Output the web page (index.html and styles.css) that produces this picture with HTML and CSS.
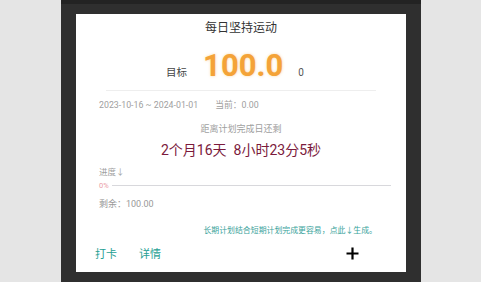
FILE: index.html
```html
<!DOCTYPE html>
<html lang="zh-CN">
<head>
    <meta charset="UTF-8">
    <meta name="viewport" content="width=device-width, initial-scale=1.0">
    <title>每日坚持运动</title>
    <link rel="stylesheet" href="styles.css">
</head>
<body>
    <div class="panel">
        <div class="card">
            <div class="title">每日坚持运动</div>
            <div class="target">
                <span class="target-label">目标</span>
                <span class="target-value">100.0</span>
                <span class="target-unit">0</span>
            </div>
            <div class="divider"></div>
            <div class="dates">
                <span>2023-10-16 ~ 2024-01-01</span>
                <span>当前：0.00</span>
            </div>
            <div class="remain-label">距离计划完成日还剩</div>
            <div class="countdown">2个月16天&nbsp; 8小时23分5秒</div>
            <div class="progress-label">进度↓</div>
            <div class="progress">
                <span class="percent">0%</span>
                <div class="bar"></div>
            </div>
            <div class="left">剩余：100.00</div>
            <div class="hint">长期计划结合短期计划完成更容易，点此↓生成。</div>
            <div class="actions">
                <span class="action">打卡</span>
                <span class="action">详情</span>
                <svg class="add" width="13" height="13" viewBox="0 0 13 13">
                    <path d="M6.5 0.5 V12.5 M0.5 6.5 H12.5" stroke="#000" stroke-width="2.2" fill="none"/>
                </svg>
            </div>
        </div>
    </div>
</body>
</html>
```

FILE: styles.css
```css
body {
    margin: 0;
    background-color: #e5e5e5;
    font-family: Roboto, "Noto Sans CJK SC", sans-serif;
    display: flex;
    justify-content: center;
}

.panel {
    width: 330px;
    height: 268px;
    margin-left: 1px;
    background-color: #2f2f2f;
    border-top: 4px solid #232323;
    padding: 10px 15px 0;
}

.card {
    background-color: #fff;
    height: 258px;
    display: flex;
    flex-direction: column;
}

.title {
    margin-top: 6px;
    text-align: center;
    font-size: 12px;
    line-height: 16px;
    color: #333;
}

.target {
    margin-top: 12px;
    display: flex;
    justify-content: center;
    align-items: baseline;
    padding-right: 12px;
    height: 36px;
}

.target-label {
    font-size: 10.5px;
    color: #444;
}

.target-value {
    margin-left: 16px;
    font-size: 31px;
    line-height: 36px;
    font-weight: bold;
    color: #f4a338;
    text-shadow: 0 0 3px rgba(245, 166, 50, 0.45);
}

.target-unit {
    margin-left: 15px;
    font-size: 10px;
    color: #555;
}

.divider {
    margin: 6px 30px 0;
    height: 1px;
    background-color: #eee;
}

.dates {
    margin-top: 8px;
    padding-left: 23px;
    display: flex;
    gap: 17px;
    font-size: 8.8px;
    line-height: 13px;
    color: #a0a0a0;
}

.remain-label {
    margin-top: 11px;
    text-align: center;
    font-size: 9px;
    line-height: 13px;
    color: #a0a0a0;
}

.countdown {
    margin-top: 4px;
    text-align: center;
    font-size: 14px;
    line-height: 20px;
    color: #7b1a3c;
}

.progress-label {
    margin-top: 6px;
    padding-left: 23px;
    font-size: 8.5px;
    line-height: 13px;
    color: #a0a0a0;
}

.progress {
    padding-left: 23px;
    padding-right: 15px;
    display: flex;
    align-items: center;
    height: 13px;
}

.percent {
    font-size: 7.5px;
    color: #eba0a8;
}

.bar {
    flex: 1;
    margin-left: 3px;
    height: 1px;
    background-color: #d8d8dc;
}

.left {
    margin-top: 6px;
    padding-left: 23px;
    font-size: 9px;
    line-height: 13px;
    color: #999;
}

.hint {
    margin-top: 14px;
    padding-right: 29px;
    text-align: right;
    font-size: 7.9px;
    line-height: 12px;
    color: #3aa39b;
}

.actions {
    margin-top: 8px;
    padding-left: 19px;
    display: flex;
    align-items: center;
    height: 16px;
}

.action {
    font-size: 11px;
    color: #26a093;
    margin-right: 22px;
}

.add {
    margin-left: auto;
    margin-right: 47px;
}
```
